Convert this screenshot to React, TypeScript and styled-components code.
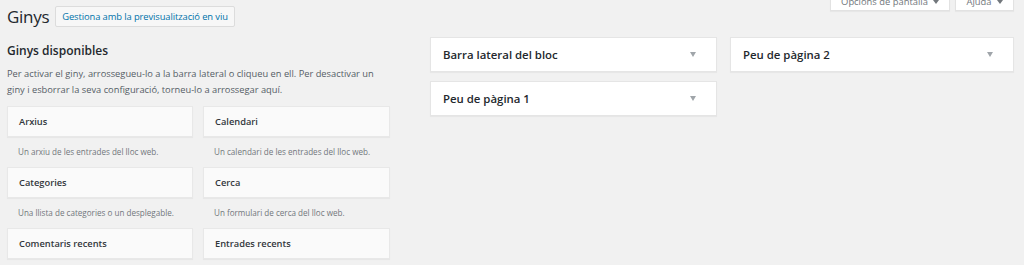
import React from "react";
import styled, { createGlobalStyle } from "styled-components";

const GlobalStyle = createGlobalStyle`
  html, body {
    margin: 0;
    padding: 0;
    background: #f1f1f1;
    overflow: hidden;
  }
  body {
    font-family: 'Open Sans', 'Noto Sans', sans-serif;
    color: #444;
  }
`;

const Page = styled.div`
  width: 1024px;
  height: 265px;
  box-sizing: border-box;
  padding: 0 10px 0 7px;
  overflow: hidden;
`;

const Header = styled.div`
  display: flex;
  justify-content: space-between;
  align-items: flex-start;
  height: 30px;
`;

const TitleRow = styled.div`
  display: flex;
  align-items: center;
  gap: 6px;
  margin-top: 6px;
`;

const Title = styled.h1`
  margin: 0;
  font-size: 17px;
  font-weight: 400;
  line-height: 21px;
  color: #23282d;
  letter-spacing: -0.3px;
`;

const LiveButton = styled.a`
  display: inline-flex;
  align-items: center;
  height: 21px;
  box-sizing: border-box;
  padding: 0 6px;
  border: 1px solid #dcdcdc;
  background: #f7f7f7;
  border-radius: 2px;
  color: #0073aa;
  font-size: 9.4px;
  font-weight: 500;
  text-decoration: none;
  letter-spacing: -0.1px;
`;

const Tabs = styled.div`
  display: flex;
  gap: 5px;
  margin-top: -13px;
`;

const Tab = styled.button<{ w: number }>`
  width: ${({ w }) => w}px;
  height: 24px;
  padding: 0;
  border: 1px solid #e2e2e2;
  border-top: none;
  background: #fff;
  box-shadow: 0 1px 1px rgba(0, 0, 0, 0.04);
  font-family: inherit;
  font-size: 9.4px;
  color: #72777c;
  padding-top: 6px;
  display: flex;
  align-items: center;
  justify-content: center;
  gap: 5px;
`;

const SmallArrow = styled.span`
  width: 0;
  height: 0;
  border-left: 3px solid transparent;
  border-right: 3px solid transparent;
  border-top: 4px solid #72777c;
`;

const Columns = styled.div`
  display: flex;
  gap: 40px;
`;

const LeftColumn = styled.div`
  width: 383px;
  flex: none;
`;

const SectionTitle = styled.h2`
  margin: 13px 0 0;
  font-size: 12px;
  font-weight: 600;
  line-height: 16px;
  color: #23282d;
`;

const Intro = styled.p`
  margin: 7px 0 0;
  max-width: 372px;
  font-size: 9.3px;
  line-height: 15.5px;
  color: #555d66;
`;

const WidgetGrid = styled.div`
  display: grid;
  grid-template-columns: 186px 187px;
  column-gap: 10px;
  margin-top: 9px;
`;

const WidgetItem = styled.div`
  height: 61px;
`;

const WidgetTop = styled.div`
  height: 31px;
  box-sizing: border-box;
  background: #fafafa;
  border: 1px solid #e8e8e8;
  box-shadow: 0 1px 1px rgba(0, 0, 0, 0.04);
  display: flex;
  align-items: center;
  padding: 0 11px;
  font-size: 9.3px;
  font-weight: 600;
  color: #32373c;
`;

const WidgetDescription = styled.div`
  padding: 9px 11px 0;
  font-size: 8.1px;
  line-height: 12px;
  color: #72777c;
`;

const SidebarGrid = styled.div`
  display: grid;
  grid-template-columns: 287px 284px;
  column-gap: 13px;
  row-gap: 9px;
  align-content: start;
  padding-top: 7px;
`;

const SidebarBox = styled.div`
  height: 35px;
  box-sizing: border-box;
  background: #fff;
  border: 1px solid #e5e5e5;
  box-shadow: 0 1px 1px rgba(0, 0, 0, 0.04);
  display: flex;
  align-items: center;
  justify-content: space-between;
  padding: 0 20px 0 12px;
  font-size: 11.4px;
  font-weight: 600;
  color: #23282d;
`;

const ToggleArrow = styled.span`
  width: 0;
  height: 0;
  border-left: 3px solid transparent;
  border-right: 3px solid transparent;
  border-top: 5px solid #a0a5aa;
`;

const widgets = [
  { name: "Arxius", desc: "Un arxiu de les entrades del lloc web." },
  { name: "Calendari", desc: "Un calendari de les entrades del lloc web." },
  { name: "Categories", desc: "Una llista de categories o un desplegable." },
  { name: "Cerca", desc: "Un formulari de cerca del lloc web." },
  { name: "Comentaris recents", desc: "Els comentaris més recents del lloc." },
  { name: "Entrades recents", desc: "Les entrades més recents del lloc." },
];

const sidebars = ["Barra lateral del bloc", "Peu de pàgina 2", "Peu de pàgina 1"];

export default function App() {
  return (
    <Page>
      <GlobalStyle />
      <Header>
        <TitleRow>
          <Title>Ginys</Title>
          <LiveButton href="#">Gestiona amb la previsualització en viu</LiveButton>
        </TitleRow>
        <Tabs>
          <Tab w={120}>
            Opcions de pantalla <SmallArrow />
          </Tab>
          <Tab w={59}>
            Ajuda <SmallArrow />
          </Tab>
        </Tabs>
      </Header>
      <Columns>
        <LeftColumn>
          <SectionTitle>Ginys disponibles</SectionTitle>
          <Intro>
            Per activar el giny, arrossegueu-lo a la barra lateral o cliqueu en ell. Per desactivar un
            giny i esborrar la seva configuració, torneu-lo a arrossegar aquí.
          </Intro>
          <WidgetGrid>
            {widgets.map((w) => (
              <WidgetItem key={w.name}>
                <WidgetTop>{w.name}</WidgetTop>
                <WidgetDescription>{w.desc}</WidgetDescription>
              </WidgetItem>
            ))}
          </WidgetGrid>
        </LeftColumn>
        <SidebarGrid>
          {sidebars.map((s) => (
            <SidebarBox key={s}>
              {s}
              <ToggleArrow />
            </SidebarBox>
          ))}
        </SidebarGrid>
      </Columns>
    </Page>
  );
}
